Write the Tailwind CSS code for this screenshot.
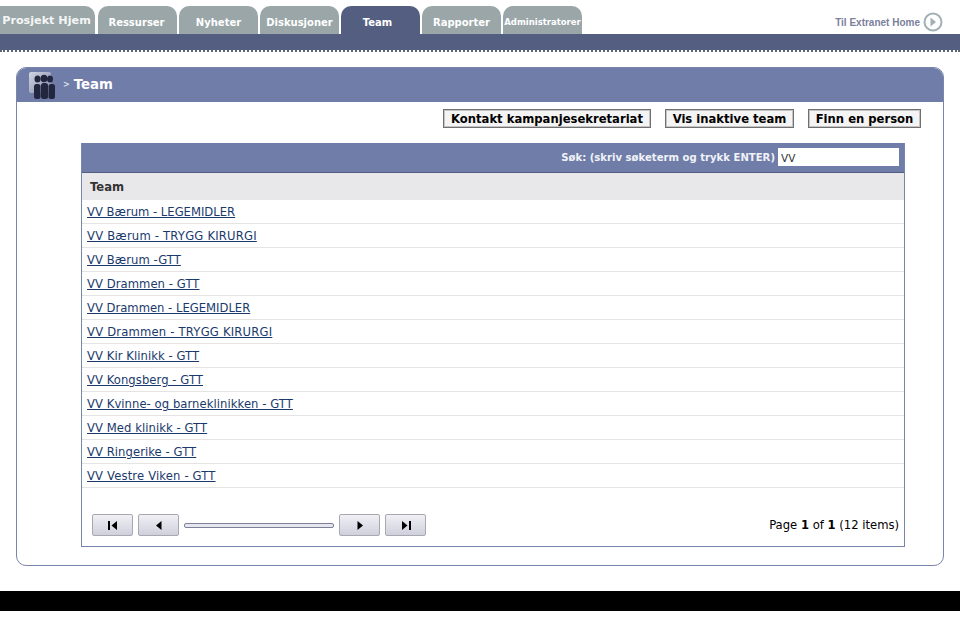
<!DOCTYPE html>
<html lang="no">

<head>
    <meta charset="UTF-8">
    <meta name="viewport" content="width=device-width, initial-scale=1.0">
    <title>Team</title>
    <script src="https://cdn.jsdelivr.net/npm/@tailwindcss/browser@4"></script>
</head>

<body class="bg-white h-[619px] overflow-hidden font-['DejaVu_Sans',Verdana,sans-serif] text-[11.6px] text-black">
    <!-- toppmeny -->
    <div class="h-[34px] pt-[6px] flex items-start justify-between">
        <div class="flex h-[28px]">
            <a class="w-[95px] mr-[3px] h-full rounded-tr-[10px] bg-[#9aa6a8] text-[#f4f6f6] font-bold text-[11.2px] flex items-center justify-center pr-[2px] pt-[3px]">Prosjekt Hjem</a>
            <a class="w-[79px] mr-[2px] h-full rounded-t-[10px] bg-[#9aa6a8] text-white font-bold text-[10px] flex items-center justify-center pt-[4px] pr-[2px]">Ressurser</a>
            <a class="w-[79px] mr-[2px] h-full rounded-t-[10px] bg-[#9aa6a8] text-white font-bold text-[10px] flex items-center justify-center pt-[4px]">Nyheter</a>
            <a class="w-[79px] mr-[2px] h-full rounded-t-[10px] bg-[#9aa6a8] text-white font-bold text-[10px] flex items-center justify-center pt-[4px]">Diskusjoner</a>
            <a class="w-[79px] mr-[2px] h-full rounded-t-[10px] bg-[#545e80] text-white font-bold text-[10px] flex items-center justify-center pt-[4px] pr-[6px]">Team</a>
            <a class="w-[79px] mr-[2px] h-full rounded-t-[10px] bg-[#9aa6a8] text-white font-bold text-[10px] flex items-center justify-center pt-[4px]">Rapporter</a>
            <a class="w-[79px] h-full rounded-t-[10px] bg-[#9aa6a8] text-white font-bold text-[8.5px] flex items-center justify-center whitespace-nowrap pt-[4px]">Administratorer</a>
        </div>
        <a class="flex items-center gap-[3px] mr-[17px] mt-[6px] text-[#7b819c] font-bold text-[10px] font-['Liberation_Sans',Arial,sans-serif]">
            <span>Til Extranet Home</span>
            <svg width="20" height="20" viewBox="0 0 20 20"><circle cx="10" cy="10" r="8.500" fill="#fff" stroke="#a3b0b3" stroke-width="2"/><path d="M7.500 5.500 13 10l-5.500 4.500z" fill="#a3b0b3"/></svg>
        </a>
    </div>
    <div class="h-[16px] bg-[#545e80]"></div>
    <div class="h-[2px] border-t-2 border-dotted border-[#5c6470]"></div>

    <!-- hovedpanel -->
    <div class="mt-[15px] ml-[16px] w-[928px] h-[499px] rounded-[10px] border border-[#7a85ab] overflow-hidden">
        <div class="h-[34px] bg-[#6f7da8] flex items-center pl-[12px]">
            <div class="relative w-[27px] h-[28px] mt-[2px]">
                <div class="absolute left-0 top-0 w-[22px] h-[21px] rounded-[2px] bg-gradient-to-br from-[#d3d7e3] to-[#7f89a8]"></div>
                <svg class="absolute left-0 top-0" width="27" height="28" viewBox="0 0 27 28" fill="#22273f">
                    <ellipse cx="8.500" cy="7" rx="3" ry="3.500"/><ellipse cx="21" cy="7" rx="3" ry="3.500"/><ellipse cx="15" cy="6.500" rx="3.500" ry="3.800"/>
                    <rect x="5" y="12" width="6.500" height="15" rx="2.500"/><rect x="12" y="11" width="7" height="16" rx="2.500"/><rect x="19.500" y="12" width="6.500" height="15" rx="2.500"/>
                </svg>
            </div>
            <span class="ml-[7px] text-[#dfe3ee] text-[8px] font-bold leading-none">&gt;</span>
            <span class="ml-[4px] text-white font-bold text-[13.3px] pb-[1px]">Team</span>
        </div>

        <!-- knapper -->
        <div class="flex justify-end gap-[14px] mt-[7px] pr-[22px]">
            <button class="h-[19px] w-[208px] pt-[2px] border border-[#707070] shadow-[inset_1px_1px_0_#c4c4c4,inset_-1px_-1px_0_#c4c4c4] bg-[#f4f4f4] font-bold text-[11.6px] leading-none">Kontakt kampanjesekretariat</button>
            <button class="h-[19px] w-[129px] pt-[2px] border border-[#707070] shadow-[inset_1px_1px_0_#c4c4c4,inset_-1px_-1px_0_#c4c4c4] bg-[#f4f4f4] font-bold text-[11.6px] leading-none">Vis inaktive team</button>
            <button class="h-[19px] w-[113px] pt-[2px] border border-[#707070] shadow-[inset_1px_1px_0_#c4c4c4,inset_-1px_-1px_0_#c4c4c4] bg-[#f4f4f4] font-bold text-[11.6px] leading-none">Finn en person</button>
        </div>

        <!-- tabell -->
        <div class="mt-[15px] ml-[64px] w-[824px] h-[404px] border border-t-0 border-[#7a85ab]">
            <div class="h-[30px] bg-[#6f7da8] border-b border-[#545e80] flex items-center justify-end pr-[5px] pb-[1px]">
                <span class="text-[#f0f2f8] font-bold text-[10.1px] mr-[3px] pt-[2px]">Søk: (skriv søketerm og trykk ENTER)</span>
                <input type="text" value="VV" class="w-[121px] h-[18px] bg-white px-[3px] pt-[2px] text-[10.5px] text-[#333] outline-none">
            </div>
            <div class="h-[27px] bg-[#e8e8ea] flex items-center pl-[8px] pt-[2px] font-bold text-[#333] text-[11.6px]">Team</div>
            <div class="h-[24px] border-b border-[#e4e4e4] flex items-center pl-[5px] pt-[3px]"><a class="text-[#1a3a6c] underline">VV Bærum - LEGEMIDLER</a></div>
            <div class="h-[24px] border-b border-[#e4e4e4] flex items-center pl-[5px] pt-[3px]"><a class="text-[#1a3a6c] underline tracking-[0.2px]">VV Bærum - TRYGG KIRURGI</a></div>
            <div class="h-[24px] border-b border-[#e4e4e4] flex items-center pl-[5px] pt-[3px]"><a class="text-[#1a3a6c] underline tracking-[0.06px]">VV Bærum -GTT</a></div>
            <div class="h-[24px] border-b border-[#e4e4e4] flex items-center pl-[5px] pt-[3px]"><a class="text-[#1a3a6c] underline tracking-[0.06px]">VV Drammen - GTT</a></div>
            <div class="h-[24px] border-b border-[#e4e4e4] flex items-center pl-[5px] pt-[3px]"><a class="text-[#1a3a6c] underline">VV Drammen - LEGEMIDLER</a></div>
            <div class="h-[24px] border-b border-[#e4e4e4] flex items-center pl-[5px] pt-[3px]"><a class="text-[#1a3a6c] underline tracking-[0.2px]">VV Drammen - TRYGG KIRURGI</a></div>
            <div class="h-[24px] border-b border-[#e4e4e4] flex items-center pl-[5px] pt-[3px]"><a class="text-[#1a3a6c] underline tracking-[0.06px]">VV Kir Klinikk - GTT</a></div>
            <div class="h-[24px] border-b border-[#e4e4e4] flex items-center pl-[5px] pt-[3px]"><a class="text-[#1a3a6c] underline tracking-[0.06px]">VV Kongsberg - GTT</a></div>
            <div class="h-[24px] border-b border-[#e4e4e4] flex items-center pl-[5px] pt-[3px]"><a class="text-[#1a3a6c] underline tracking-[0.06px]">VV Kvinne- og barneklinikken - GTT</a></div>
            <div class="h-[24px] border-b border-[#e4e4e4] flex items-center pl-[5px] pt-[3px]"><a class="text-[#1a3a6c] underline tracking-[0.06px]">VV Med klinikk - GTT</a></div>
            <div class="h-[24px] border-b border-[#e4e4e4] flex items-center pl-[5px] pt-[3px]"><a class="text-[#1a3a6c] underline tracking-[0.06px]">VV Ringerike - GTT</a></div>
            <div class="h-[24px] border-b border-[#e4e4e4] flex items-center pl-[5px] pt-[3px]"><a class="text-[#1a3a6c] underline tracking-[0.15px]">VV Vestre Viken - GTT</a></div>

            <!-- sideveksler -->
            <div class="flex items-center mt-[26px] pl-[10px] pr-[5px] h-[22px]">
                <button class="w-[41px] h-[22px] rounded-[2px] border border-[#a8a8b0] bg-gradient-to-b from-[#f0f0f5] to-[#cfd0dc] flex items-center justify-center">
                    <svg width="10" height="9" viewBox="0 0 10 9"><path d="M0 0h2v9H0zM9 0v9L3.500 4.500z"/></svg>
                </button>
                <button class="ml-[5px] w-[41px] h-[22px] rounded-[2px] border border-[#a8a8b0] bg-gradient-to-b from-[#f0f0f5] to-[#cfd0dc] flex items-center justify-center">
                    <svg width="6" height="9" viewBox="0 0 6 9"><path d="M5.500 0v9L0 4.500z"/></svg>
                </button>
                <div class="ml-[5px] w-[150px] h-[5px] rounded-[2px] border border-[#7d8098] bg-[#e6e6ee]"></div>
                <button class="ml-[5px] w-[41px] h-[22px] rounded-[2px] border border-[#a8a8b0] bg-gradient-to-b from-[#f0f0f5] to-[#cfd0dc] flex items-center justify-center">
                    <svg width="6" height="9" viewBox="0 0 6 9"><path d="M.5 0v9L6 4.500z"/></svg>
                </button>
                <button class="ml-[5px] w-[41px] h-[22px] rounded-[2px] border border-[#a8a8b0] bg-gradient-to-b from-[#f0f0f5] to-[#cfd0dc] flex items-center justify-center">
                    <svg width="10" height="9" viewBox="0 0 10 9"><path d="M1 0v9l5.500-4.500zM8 0h2v9H8z"/></svg>
                </button>
                <div class="ml-auto pt-[1px]">Page <b>1</b> of <b>1</b> (12 items)</div>
            </div>
        </div>
    </div>

    <!-- bunn -->
    <div class="mt-[25px] h-[20px] bg-black"></div>
</body>

</html>
